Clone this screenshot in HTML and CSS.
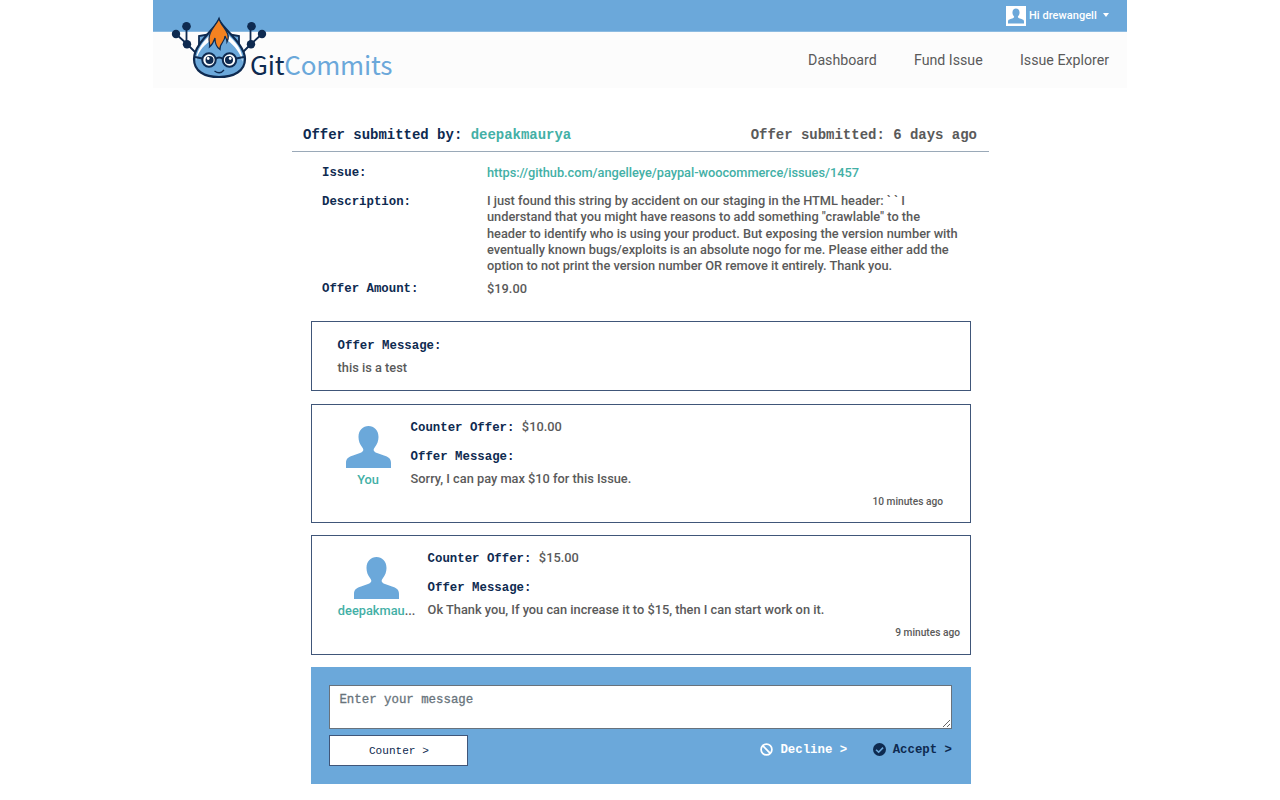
FILE: index.html
```html
<!DOCTYPE html>
<html lang="en">
<head>
<meta charset="utf-8">
<title>GitCommits</title>
<link rel="stylesheet" href="styles.css">
</head>
<body>
<svg width="0" height="0" class="defs">
  <symbol id="person" viewBox="0 0 45 42"><path d="M0 42V37C0 32 3 31 7 29.5L14 27C18 25.5 18 23.5 16 21C13.800 18 12.500 15 12.500 11C12.500 4 17 0 22.500 0S32.500 4 32.500 11C32.500 15 31.200 18 29 21C27 23.500 27 25.500 31 27L38 29.500C42 31 45 32 45 37V42Z" fill="currentColor"/></symbol>
</svg>
<div class="page">
  <div class="topbar">
    <div class="user">
      <span class="thumb"><svg><use href="#person"/></svg></span>
      <span class="hi">Hi drewangell</span><i class="caret"></i>
    </div>
  </div>
  <header class="header">
    <div class="logo">
      <svg class="mascot" viewBox="0 0 96 64">
        <g stroke="#0e2a50" stroke-width="1.800" fill="none">
          <path d="M5 19 16 29 26 39M15.500 11V29M91 19 80 29 70 39M79.500 11V29" />
          <path d="M32 36 28 31V21L37 19.500M64 36 68 31V21L59 19.500" fill="#6ba8da"/>
        </g>
        <g fill="#0e2a50"><circle cx="5" cy="19" r="4.200"/><circle cx="15.500" cy="11.200" r="4.300"/><circle cx="16" cy="29.300" r="4.200"/><circle cx="91" cy="19" r="4.200"/><circle cx="80.500" cy="11.200" r="4.300"/><circle cx="80" cy="29.300" r="4.200"/></g>
        <path d="M48 5C44 14 23 29 23 44C23 56 33 62 48 62S74 56 74 44C74 29 52 14 48 5Z" fill="#6ba8da" stroke="#0e2a50" stroke-width="2.200"/>
        <path d="M38 21C29 30 25 38 25.200 46C26.500 38 31 32 39 26Z" fill="#fff"/><path d="M58 21C68 30 72 38 71.500 47C69.500 38 64 31 56 25Z" fill="#fff"/>
        <path d="M48 3.500C45 11 38 15 38 24C38 27 39 29 38.500 32C42 29 43 26 44 23C44 28 45 32 49 34.500C48 29 54 27 54 21C55 23 56 25 56 27C61 18 50 12 48 3.500Z" fill="#f58220" stroke="#0e2a50" stroke-width="1.200"/>
        <g fill="#fff" stroke="#0e2a50" stroke-width="2"><circle cx="38" cy="45" r="6.700"/><circle cx="58.500" cy="45" r="6.700"/><path d="M44.500 44Q48 41 52 44M24 42 31.500 43.500M73 42 65 43.500" fill="none"/></g>
        <g fill="#0e2a50"><circle cx="38.500" cy="45" r="4"/><circle cx="58" cy="45" r="4"/></g>
        <g fill="#fff"><circle cx="37.200" cy="43.500" r="1.400"/><circle cx="59.200" cy="43.500" r="1.400"/></g>
        <path d="M43.500 56Q49 60 53 55" fill="none" stroke="#0e2a50" stroke-width="1.300"/>
      </svg>
      <span class="brand">Git<span>Commits</span></span>
    </div>
    <nav class="nav"><a>Dashboard</a><a>Fund Issue</a><a>Issue Explorer</a></nav>
  </header>
  <main class="offer">
    <div class="title"><h1>Offer submitted by: <a>deepakmaurya</a></h1><span>Offer submitted: 6 days ago</span></div>
    <dl class="details">
      <dt>Issue:</dt><dd><a class="url">https://github.com/angelleye/paypal-woocommerce/issues/1457</a></dd>
      <dt class="desc-label">Description:</dt><dd class="desc">I just found this string by accident on our staging in the HTML header: ` ` I<br>understand that you might have reasons to add something "crawlable" to the<br>header to identify who is using your product. But exposing the version number with<br>eventually known bugs/exploits is an absolute nogo for me. Please either add the<br>option to not print the version number OR remove it entirely. Thank you.</dd>
      <dt>Offer Amount:</dt><dd class="amount">$19.00</dd>
    </dl>
    <section class="card first"><h2>Offer Message:</h2><p>this is a test</p></section>
    <section class="card reply">
      <div class="avatar you"><svg><use href="#person"/></svg><a>You</a></div>
      <div class="body"><h2>Counter Offer: <span class="price">$10.00</span></h2><h2 class="msg">Offer Message:</h2><p>Sorry, I can pay max $10 for this Issue.</p><time class="inset">10 minutes ago</time></div>
    </section>
    <section class="card reply">
      <div class="avatar"><svg><use href="#person"/></svg><span><a>deepakmau</a>...</span></div>
      <div class="body"><h2>Counter Offer: <span class="price">$15.00</span></h2><h2 class="msg">Offer Message:</h2><p>Ok Thank you, If you can increase it to $15, then I can start work on it.</p><time>9 minutes ago</time></div>
    </section>
    <form class="respond">
      <textarea placeholder="Enter your message"></textarea>
      <div class="actions">
        <button type="button">Counter &gt;</button>
        <a class="decline"><svg viewBox="0 0 12 12"><circle cx="6" cy="6" r="5" fill="none" stroke="currentColor" stroke-width="1.600"/><path d="M2.500 2.500 9.500 9.500" stroke="currentColor" stroke-width="1.600"/></svg>Decline &gt;</a>
        <a class="accept"><svg viewBox="0 0 12 12"><circle cx="6" cy="6" r="6" fill="currentColor"/><path d="M2.800 6.200 5.200 8.500 9.300 4.300" fill="none" stroke="#6ba8da" stroke-width="1.500"/></svg>Accept &gt;</a>
      </div>
    </form>
  </main>
</div>
</body>
</html>
```
FILE: styles.css
```css
* { box-sizing: border-box; }
body { margin: 0; height: 800px; overflow: hidden; background: #fff; color: #5a5a5a; font: 500 12.8px/16px Roboto, sans-serif; }
h1, h2, p, dl, dd { margin: 0; }
a { color: #43b0a6; }
.defs { position: absolute; }
.page { width: 974px; margin: 0 auto; }
.topbar { height: 32px; background: #6ba8da; border-bottom: 1px solid #8cbbe1; display: flex; justify-content: flex-end; padding: 6px 18px 0 0; }
.user { display: flex; height: 20px; align-items: center; color: #fff; font-size: 11px; }
.thumb { width: 20px; height: 20px; background: #fff; color: #6ba8da; padding: 2px; display: flex; align-items: flex-end; }
.thumb svg { width: 16px; height: 16px; }
.hi { margin: -1px 5px 0 3px; width: 68px; white-space: nowrap; letter-spacing: .05px; }
.caret { border: 3.5px solid transparent; border-top: 4px solid #fff; border-bottom: 0; margin: -3px 0 0 1px; }
.header { height: 56px; background: #fcfcfc; display: flex; justify-content: space-between; }
.logo { display: flex; height: 64px; margin: -17px 0 0 18px; position: relative; }
.mascot { width: 96px; height: 64px; }
.brand { font: 400 26px/36px "Noto Sans CJK SC", sans-serif; color: #0e2a50; margin: 31px 0 0 -17px; letter-spacing: -.2px; }
.brand span { color: #6ba8da; }
.nav { display: flex; gap: 37.300px; padding: 18px 18px 0 0; font: 400 14.2px/21px Roboto, sans-serif; }
.nav a { color: #5a5a5a; white-space: nowrap; }
.offer { width: 697px; margin: 0 0 0 139px; padding-top: 37px; }
.title { height: 27px; border-bottom: 1px solid #9aa9b8; display: flex; justify-content: space-between; padding: 0 12px 0 11px; font: 700 13.97px/20px "Liberation Mono", monospace; }
.title h1 { font: inherit; color: #0e2a50; }
.details { display: grid; grid-template-columns: 165px 1fr; padding: 13px 0 0 30px; grid-template-rows: 28px 88px 40px; }
dt, h2 { font: 700 12.37px/17px "Liberation Mono", monospace; color: #0e2a50; }
.desc-label { padding-top: 1px; }
.url { letter-spacing: -.03px; }
.desc { line-height: 16.3px; white-space: nowrap; letter-spacing: -.02px; }
.card { margin: 0 18px 12px 19px; border: 1px solid #405679; }
.first { height: 70px; padding: 16px 25.600px; margin-bottom: 13px; }
.first p { margin-top: 5px; }
.reply { height: 119px; padding: 14px 10px 0 25.600px; display: flex; }
.reply + .reply { height: 120px; }
.avatar { width: 78px; margin: 7px 12px 0 0; display: flex; flex-direction: column; align-items: center; }
.avatar svg { width: 45px; height: 42px; color: #6ba8da; margin-bottom: 4px; }
.you { width: 61px; }
.body { flex: 1; display: flex; flex-direction: column; }
.price { font: 500 12.8px/16px Roboto, sans-serif; color: #5a5a5a; }
.body h2 { height: 17px; }
.msg { margin-top: 12px; }
.reply .msg { margin-top: 12.500px; }
.body p { margin-top: 5px; }
time { align-self: flex-end; font-size: 10.2px; margin-top: 7px; }
.inset { margin-right: 17px; }
.respond { margin: 0 18px 0 19px; height: 117px; background: #6ba8da; padding: 18px 19px 0 18.400px; }
textarea { display: block; width: 100%; height: 44px; border: 1px solid #68727c; border-radius: 0; padding: 6px 9px; font: 400 12.4px/16px "Liberation Mono", monospace; background: #fff; }
textarea::placeholder { color: #68747c; -webkit-text-stroke: .3px #68747c; }
.actions { display: flex; align-items: flex-start; margin-top: 6px; }
button { width: 139px; height: 31px; border: 1px solid #405679; background: #fff; color: #0e2a50; font: 400 11.1px/16px "Liberation Mono", monospace; padding: 1px 0 0; margin-right: auto; }
.decline, .accept { display: flex; align-items: center; font: 700 12.37px/16px "Liberation Mono", monospace; margin-top: 7px; color: #fff; }
.decline svg, .accept svg { width: 13px; height: 13px; margin: -1px 7px 0 0; }
.accept { color: #0e2a50; margin-left: 25.500px; }
```
